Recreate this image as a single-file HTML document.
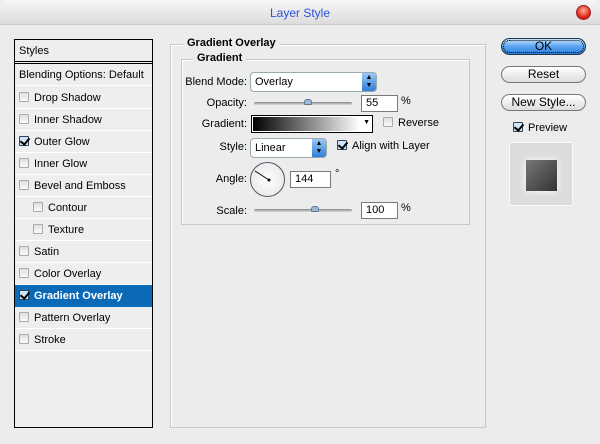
<!DOCTYPE html><html><head><style>
*{margin:0;padding:0;box-sizing:border-box}
body{width:600px;height:444px;background:#ececec;font-family:"Liberation Sans",Arial,sans-serif;font-size:11px;color:#000;position:relative;overflow:hidden}
.a{position:absolute;white-space:nowrap}
.title{left:0;top:0;width:600px;height:25px;background:linear-gradient(#f6f6f6,#dcdcdc);border-bottom:1px solid #c8c8c8;border-radius:6px 6px 0 0;text-align:center;line-height:27px;color:#2a52d8;font-size:12px}
.list{left:14px;top:39px;width:139px;height:389px;border:1px solid #000;background:#eeeeee}
.row{position:absolute;left:0;width:137px;height:22px;line-height:22px;border-bottom:1px solid #fff;padding-left:4px}
.cb{display:inline-block;width:10px;height:10px;border:1px solid #aaa;background:linear-gradient(#e0e0e0,#fafafa);vertical-align:-1px;margin-right:5px;border-radius:1px;position:relative}
.cb.on{border-color:#345;background:#cfe4f8}
.cb.on:after{content:"";position:absolute;left:2px;top:-1px;width:4px;height:7px;border:solid #000;border-width:0 2px 2px 0;transform:rotate(40deg)}
.fs{border:1px solid #c8c8c8;box-shadow:1px 1px 0 #fff inset}
.lg{background:#ececec;font-weight:bold;padding:0 4px}
.inp{background:#fff;border:1px solid #7a7a7a;height:17px;line-height:15px;padding-left:4px}
.sel{background:#fff;border:1px solid #9aa;border-radius:4px;height:20px;line-height:18px;padding-left:4px}
.arr{position:absolute;right:0;top:0;width:14px;height:18px;background:linear-gradient(#9cc8f4,#2d7fd8);border-radius:0 3px 3px 0;color:#000;font-size:7px;line-height:8px;text-align:center;padding-top:1px}
.sl{height:3px;background:linear-gradient(#888,#ddd);border-radius:2px}
.th{width:8px;height:6px;background:#9ab8e0;border:1px solid #678;border-radius:3px 3px 1px 1px}
.btn{left:501px;width:85px;height:17px;border:1px solid #777;border-radius:9px;background:linear-gradient(#fff,#ddd);text-align:center;line-height:15px;font-family:"Liberation Sans",Arial,sans-serif;font-size:12px}
.r{text-align:right;width:70px}
</style></head><body>
<div class="a title">Layer Style</div>
<div class="a" style="left:576px;top:5px;width:15px;height:15px;border-radius:50%;background:radial-gradient(circle at 50% 35%,#ffb0a0,#e52a1a 60%,#a01008);border:1px solid #922"></div>
<div class="a list">
<div class="row" style="top:0;height:24px;border-bottom:3px double #000">Styles</div>
<div class="row" style="top:24px">Blending Options: Default</div>
<div class="row" style="top:47px"><span class="cb"></span>Drop Shadow</div>
<div class="row" style="top:69px"><span class="cb"></span>Inner Shadow</div>
<div class="row" style="top:91px"><span class="cb on"></span>Outer Glow</div>
<div class="row" style="top:113px"><span class="cb"></span>Inner Glow</div>
<div class="row" style="top:135px"><span class="cb"></span>Bevel and Emboss</div>
<div class="row" style="top:157px;padding-left:18px"><span class="cb"></span>Contour</div>
<div class="row" style="top:179px;padding-left:18px"><span class="cb"></span>Texture</div>
<div class="row" style="top:201px"><span class="cb"></span>Satin</div>
<div class="row" style="top:223px"><span class="cb"></span>Color Overlay</div>
<div class="row" style="top:245px;background:#0b6ab8;color:#fff;font-weight:bold;border-bottom-color:#0b6ab8"><span class="cb on"></span>Gradient Overlay</div>
<div class="row" style="top:267px"><span class="cb"></span>Pattern Overlay</div>
<div class="row" style="top:289px"><span class="cb"></span>Stroke</div>
</div>
<div class="a fs" style="left:170px;top:44px;width:316px;height:384px"></div>
<div class="a lg" style="left:183px;top:37px">Gradient Overlay</div>
<div class="a fs" style="left:181px;top:59px;width:289px;height:166px"></div>
<div class="a lg" style="left:193px;top:52px">Gradient</div>
<div class="a r" style="left:177px;top:76px">Blend Mode:</div>
<div class="a sel" style="left:250px;top:72px;width:127px">Overlay<div class="arr">▲<br>▼</div></div>
<div class="a r" style="left:177px;top:97px">Opacity:</div>
<div class="a sl" style="left:254px;top:102px;width:98px"></div>
<div class="a th" style="left:304px;top:99px"></div>
<div class="a inp" style="left:361px;top:95px;width:37px">55</div>
<div class="a" style="left:401px;top:95px">%</div>
<div class="a r" style="left:177px;top:118px">Gradient:</div>
<div class="a" style="left:251px;top:115px;width:122px;height:18px;border:1px solid #000;background:#fff"><div style="position:absolute;left:1px;top:1px;width:107px;height:14px;background:linear-gradient(90deg,#000,#fff)"></div><div style="position:absolute;right:2px;top:3px;font-size:7px">▼</div></div>
<div class="a" style="left:383px;top:117px"><span class="cb"></span>Reverse</div>
<div class="a r" style="left:177px;top:141px">Style:</div>
<div class="a sel" style="left:250px;top:138px;width:77px">Linear<div class="arr">▲<br>▼</div></div>
<div class="a" style="left:337px;top:140px"><span class="cb on"></span>Align with Layer</div>
<div class="a r" style="left:177px;top:173px">Angle:</div>
<div class="a" style="left:250px;top:162px;width:35px;height:35px;border-radius:50%;border:1px solid #556;background:radial-gradient(#fff,#e4e4e4)"><svg width="33" height="33" style="position:absolute;left:0;top:0"><line x1="4" y1="8" x2="18" y2="17" stroke="#000" stroke-width="1"/><circle cx="18" cy="17" r="1.5"/></svg></div>
<div class="a inp" style="left:290px;top:171px;width:41px">144</div>
<div class="a" style="left:335px;top:168px">°</div>
<div class="a r" style="left:177px;top:205px">Scale:</div>
<div class="a sl" style="left:254px;top:209px;width:98px"></div>
<div class="a th" style="left:311px;top:206px"></div>
<div class="a inp" style="left:361px;top:202px;width:37px">100</div>
<div class="a" style="left:401px;top:202px">%</div>
<div class="a btn" style="top:38px;background:linear-gradient(#c8e4ff,#5aa4f0 50%,#2d80e0);border-color:#234;outline:1px dotted #000;outline-offset:-3px">OK</div>
<div class="a btn" style="top:66px">Reset</div>
<div class="a btn" style="top:94px">New Style...</div>
<div class="a" style="left:513px;top:122px"><span class="cb on"></span>Preview</div>
<div class="a" style="left:509px;top:142px;width:64px;height:64px;background:#dcdcdc;border:1px solid #f8f8f8"><div style="position:absolute;left:16px;top:17px;width:31px;height:31px;background:linear-gradient(135deg,#777,#333);box-shadow:0 0 8px #fff"></div></div>
</body></html>
